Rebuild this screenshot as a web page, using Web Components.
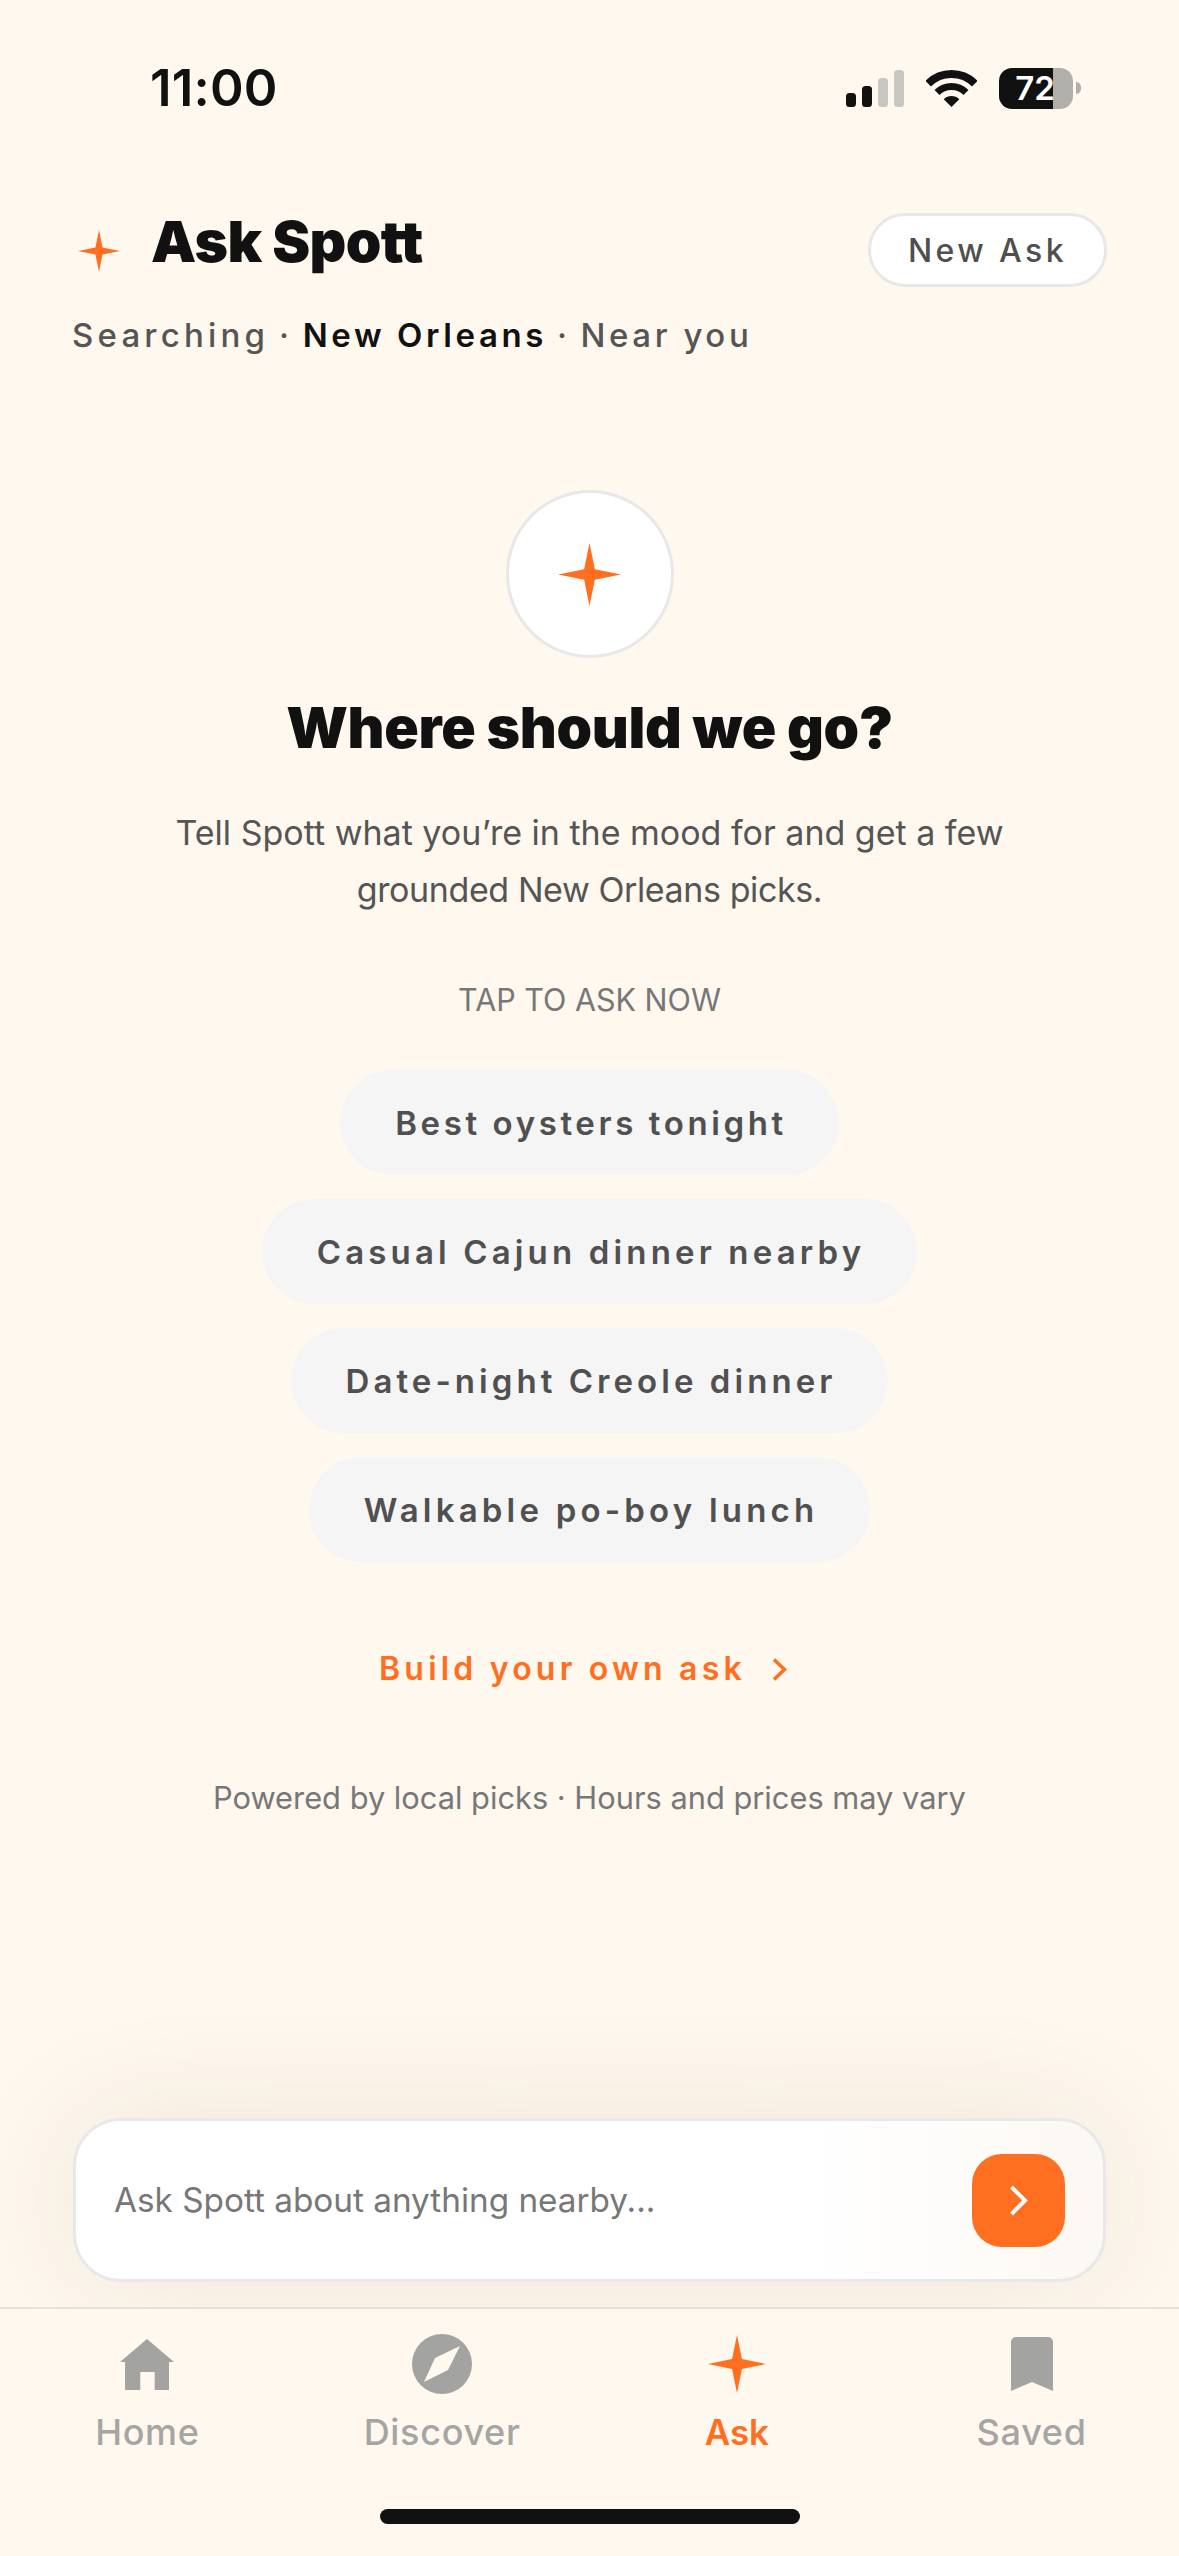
<!DOCTYPE html>
<html lang="en"><head><meta charset="utf-8"><title>Ask Spott</title>
<style>
html,body{margin:0;padding:0;background:#FFF8EE}
body{width:1179px;height:2556px;overflow:hidden;font-family:Inter,"Noto Sans",sans-serif;-webkit-font-smoothing:antialiased}
spott-app{display:flex}
</style></head><body>
<spott-app>
  <spott-status slot="status"></spott-status>
  <spott-header slot="header" place="New Orleans"></spott-header>
  <spott-hero slot="main">
    <spott-chip style="--ls:3.6px">Best oysters tonight</spott-chip>
    <spott-chip style="--ls:4.15px">Casual Cajun dinner nearby</spott-chip>
    <spott-chip style="--ls:4.05px">Date-night Creole dinner</spott-chip>
    <spott-chip style="--ls:4.2px">Walkable po-boy lunch</spott-chip>
  </spott-hero>
  <spott-composer slot="composer"></spott-composer>
  <spott-tabbar slot="tabs">
    <spott-tab icon="home">Home</spott-tab>
    <spott-tab icon="compass">Discover</spott-tab>
    <spott-tab icon="spark" active>Ask</spott-tab>
    <spott-tab icon="bookmark">Saved</spott-tab>
  </spott-tabbar>
</spott-app>
<script>
const STAR='M50 0L58.5 41.5L100 50L58.5 58.5L50 100L41.5 58.5L0 50L41.5 41.5Z';
const ORANGE='#FF6F1F';
function comp(tag,html){
  customElements.define(tag,class extends HTMLElement{
    constructor(){super();const r=this.attachShadow({mode:'open'});r.innerHTML=typeof html==='function'?html(this):html;}
  });
}
comp('spott-app',`<style>
:host{display:flex;flex-direction:column;width:1179px;height:2556px;background:#FFF8EE;color:#111;overflow:hidden}
.main{flex:1;min-height:0}
</style>
<slot name="status"></slot><slot name="header"></slot>
<div class="main"><slot name="main"></slot></div>
<slot name="composer"></slot><slot name="tabs"></slot>`);

comp('spott-spark',`<style>:host{display:block;width:var(--size,42px);height:var(--size,42px)}svg{display:block;width:100%;height:100%}</style>
<svg viewBox="0 0 100 100"><path fill="${ORANGE}" d="${STAR}"/></svg>`);

comp('spott-status',`<style>
:host{display:flex;align-items:center;justify-content:space-between;height:176px;padding:0 98px 0 150px;box-sizing:border-box}
.time{font:600 51px/60px Inter,sans-serif;color:#111;letter-spacing:.2px}
.right{display:flex;align-items:center}
.sig{display:flex;align-items:flex-end;gap:6px;height:37px;margin-right:22px}
.sig i{display:block;width:10px;border-radius:3.5px;background:#C9C7C1}
.sig i.on{background:#111}
.wifi{display:block;width:51px;height:37px;margin-right:22px}
.bat{width:74px;height:41px;border-radius:13px;overflow:hidden;background:linear-gradient(90deg,#111 0 54px,#B0AFAA 54px);
 display:flex;align-items:center;justify-content:center;color:#fff;font:600 33px/41px Inter,sans-serif;box-sizing:border-box;padding-right:2px}
.nub{width:5px;height:12px;margin-left:3px;background:#B0AFAA;border-radius:0 6px 6px 0}
</style>
<div class="time">11:00</div>
<div class="right">
 <div class="sig"><i class="on" style="height:14px"></i><i class="on" style="height:21px"></i><i style="height:29px"></i><i style="height:37px"></i></div>
 <svg class="wifi" viewBox="0 0 51 37" fill="none" stroke="#111"><path stroke-width="8" d="M2.2 13.7A33 33 0 0 1 48.8 13.7"/><path stroke-width="7" d="M11 22.5A20.5 20.5 0 0 1 40 22.5"/><path fill="#111" stroke="none" d="M25.5 37L17.7 29.2A11 11 0 0 1 33.3 29.2Z"/></svg>
 <div class="bat">72</div><div class="nub"></div>
</div>`);

comp('spott-header',el=>`<style>
:host{display:block;padding:37px 72px 0 72px}
.row{display:flex;justify-content:space-between;align-items:flex-start}
.brand{display:flex;align-items:flex-start}
spott-spark{--size:42px;margin:17px 31px 0 6px}
h1{margin:0;font:900 57px/58px Inter,sans-serif;color:#111;letter-spacing:-.6px}
button{all:unset;box-sizing:border-box;width:239px;height:74px;padding-top:2px;border:3px solid #E8E8E8;border-radius:37px;background:#fff;display:flex;align-items:center;justify-content:center;font:500 32px/40px Inter,sans-serif;letter-spacing:3.4px;color:#4F4F4F}
.sub{margin-top:26px;font:500 33px/44px Inter,sans-serif;letter-spacing:3.6px;color:#555;display:flex;white-space:pre}
.sub .s{letter-spacing:4.2px}
.sub b{font-weight:600;color:#111}
.sub .d{margin:0 -2.5px}
</style>
<div class="row"><div class="brand"><spott-spark></spott-spark><h1>Ask Spott</h1></div><button>New Ask</button></div>
<div class="sub"><span class="s">Searching</span><span class="d"> · </span><b>${el.getAttribute('place')}</b><span class="d"> · </span><span>Near you</span></div>`);

comp('spott-hero',`<style>
:host{display:flex;flex-direction:column;align-items:center;text-align:center}
.circle{margin-top:133px;width:168px;height:168px;box-sizing:border-box;border-radius:50%;background:#fff;border:3px solid #E8E8E8;display:flex;align-items:center;justify-content:center}
spott-spark{--size:63px}
h2{margin:35px 0 0;font:900 57px/70px Inter,sans-serif;letter-spacing:-.3px;color:#111}
p{margin:41px 0 0;font:400 34px/57px Inter,sans-serif;color:#555}
p span{letter-spacing:-.4px}
.tap{margin-top:62px;font:400 30.5px/40px Inter,sans-serif;color:#777}
.chips{margin-top:50px;display:flex;flex-direction:column;align-items:center;gap:24px}
.build{margin-top:85px;padding-right:13px;display:flex;align-items:center;gap:26px;font:600 32px/44px Inter,sans-serif;letter-spacing:4.2px;color:${ORANGE}}
.build svg{display:block;width:15px;height:23px}
.note{margin-top:85px;font:400 30.8px/44px Inter,sans-serif;color:#777}
</style>
<div class="circle"><spott-spark></spott-spark></div>
<h2>Where should we go?</h2>
<p>Tell Spott what you’re in the mood for and get a few<br><span>grounded New Orleans picks.</span></p>
<div class="tap">TAP TO ASK NOW</div>
<div class="chips"><slot></slot></div>
<div class="build">Build your own ask<svg viewBox="0 0 15 23" fill="none" stroke="${ORANGE}" stroke-width="3.6"><path d="M2 1.5L12.5 11.5L2 21.5"/></svg></div>
<div class="note">Powered by local picks · Hours and prices may vary</div>`);

comp('spott-chip',`<style>
:host{display:flex;align-items:center;height:105px;padding:0 52px 0 55px;border-radius:53px;background:#F5F5F5;font:600 33px/44px Inter,sans-serif;letter-spacing:var(--ls,4px);color:#505050;white-space:nowrap}
</style><slot></slot>`);

comp('spott-composer',`<style>
:host{display:block;padding:0 73px 25px}
.box{box-sizing:border-box;height:164px;border:3px solid #E8E8E8;border-radius:48px;background:linear-gradient(90deg,#fff 72%,#FCF8F3);
 box-shadow:0 0 130px rgba(70,40,10,.09);display:flex;align-items:center;justify-content:space-between;padding:0 38px}
.ph{font:400 33.3px/44px Inter,sans-serif;color:#777}
.send{width:93px;height:93px;border-radius:30px;background:${ORANGE};display:flex;align-items:center;justify-content:center}
.send svg{display:block;width:19px;height:31px}
</style>
<div class="box"><div class="ph">Ask Spott about anything nearby...</div>
<div class="send"><svg viewBox="0 0 19 31" fill="none" stroke="#fff" stroke-width="4"><path d="M2.5 2L16 15.5L2.5 29"/></svg></div></div>`);

comp('spott-tabbar',`<style>
:host{display:block;position:relative;z-index:1;height:249px;box-sizing:border-box;border-top:2px solid #E6E1D9;background:#FFF8EE}
.tabs{display:grid;grid-template-columns:repeat(4,1fr);padding-top:24px}
.home{width:420px;height:15px;border-radius:8px;background:#111;margin:55px auto 0}
</style>
<div class="tabs"><slot></slot></div><div class="home"></div>`);

const ICONS={
 home:`<svg width="54" height="51" viewBox="0 0 54 51" fill="#A3A3A1"><path fill-rule="evenodd" d="M27 0L54 23H49V51H34.7V33H20.3V51H5V23H0Z"/></svg>`,
 compass:`<svg width="60" height="60" viewBox="0 0 60 60"><circle cx="30" cy="30" r="30" fill="#A3A3A1"/><path fill="#FFF8EE" d="M48 12L36 36L12 48L23 24Z"/></svg>`,
 spark:`<svg width="58" height="58" viewBox="0 0 100 100"><path fill="${ORANGE}" d="${STAR}"/></svg>`,
 bookmark:`<svg width="42" height="54" viewBox="0 0 42 54" fill="#A3A3A1"><path d="M5 0H37A5 5 0 0 1 42 5V54L21 45L0 54V5A5 5 0 0 1 5 0Z"/></svg>`
};
comp('spott-tab',el=>{const a=el.hasAttribute('active');return `<style>
:host{display:flex;flex-direction:column;align-items:center}
.ic{height:62px;display:flex;align-items:center;justify-content:center}
svg{display:block}
.l{margin-top:15px;font:${a?600:500} ${a?35:36}px/44px Inter,sans-serif;letter-spacing:${a?0:.7}px;color:${a?ORANGE:'#A5A5A3'}}
</style><div class="ic">${ICONS[el.getAttribute('icon')]}</div><div class="l"><slot></slot></div>`});
</script>
</body></html>
